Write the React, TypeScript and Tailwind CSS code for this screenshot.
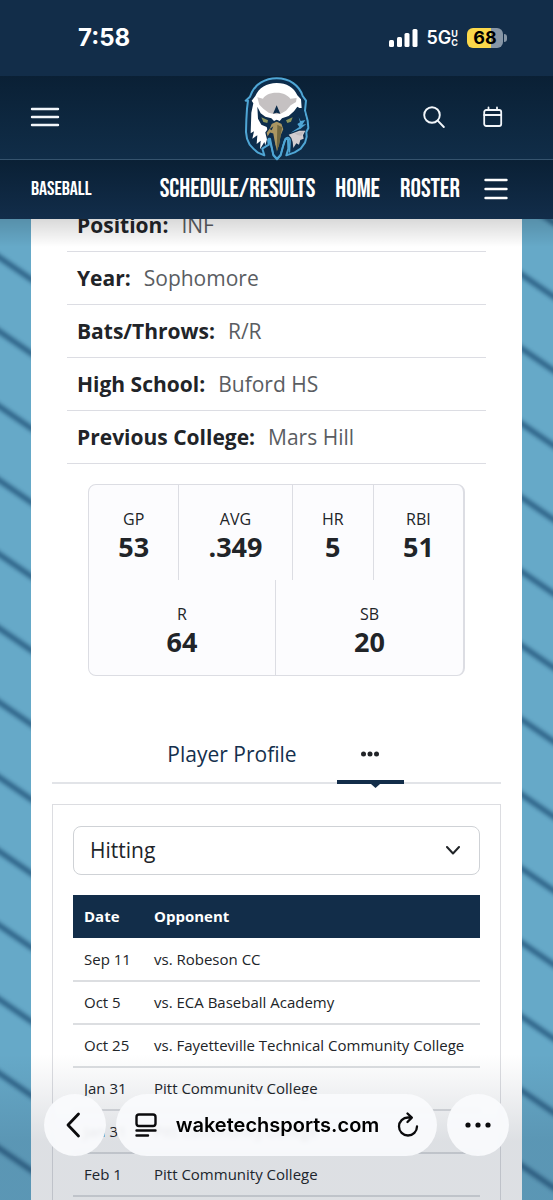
import React from "react";

type Stat = { label: string; value: string };
type Game = { date: string; opponent: string };

const BIO = [
  { label: "Position", value: "INF" },
  { label: "Year", value: "Sophomore" },
  { label: "Bats/Throws", value: "R/R" },
  { label: "High School", value: "Buford HS" },
  { label: "Previous College", value: "Mars Hill" },
];

const STATS_TOP: Stat[] = [
  { label: "GP", value: "53" },
  { label: "AVG", value: ".349" },
  { label: "HR", value: "5" },
  { label: "RBI", value: "51" },
];

const STATS_BOTTOM: Stat[] = [
  { label: "R", value: "64" },
  { label: "SB", value: "20" },
];

const GAMES: Game[] = [
  { date: "Sep 11", opponent: "vs. Robeson CC" },
  { date: "Oct 5", opponent: "vs. ECA Baseball Academy" },
  { date: "Oct 25", opponent: "vs. Fayetteville Technical Community College" },
  { date: "Jan 31", opponent: "Pitt Community College" },
  { date: "Jan 31", opponent: "Pitt Community College" },
  { date: "Feb 1", opponent: "Pitt Community College" },
];

const StatusBar: React.FC = () => (
  <div className="flex h-[76px] items-center justify-between bg-[#122d49] pr-[46px] pl-[78px] font-['Inter',sans-serif] text-white">
    <span className="text-2xl font-bold">7:58</span>
    <div className="flex items-center gap-[9px]">
      <svg width="29" height="18" viewBox="0 0 29 18" fill="#fff" aria-hidden="true">
        <rect x="0" y="11" width="5" height="7" rx="1.5" />
        <rect x="8" y="8" width="5" height="10" rx="1.5" />
        <rect x="15.500" y="4" width="5" height="14" rx="1.500" />
        <rect x="23.500" y="0" width="5" height="18" rx="1.500" />
      </svg>
      <div className="flex items-center text-lg font-semibold">
        <span>5G</span>
        <span className="flex flex-col text-[9px] leading-[9px] font-bold">
          <span>U</span>
          <span>C</span>
        </span>
      </div>
      <div className="flex items-center gap-px">
        <div className="flex h-5 w-9 items-center justify-center rounded-md bg-linear-to-r from-[#fbd84a] from-68% to-[#8796a6] to-68% text-lg font-bold text-black">
          68
        </div>
        <div className="h-2 w-[3px] rounded-r-full bg-[#8796a6]" />
      </div>
    </div>
  </div>
);

const EagleLogo: React.FC = () => (
  <svg className="h-[84px] w-[68px]" viewBox="35 21 204 252" role="img" aria-label="Wake Tech Eagles">
    <path
      d="M136 25 C100 25 72 44 62 66 L56 80 L43 92 L50 92 L47 116 L45 150 L44 186 L47 206 L55 224 L68 238 L80 248 L99 256 L93 236 L112 224 L110 206 L116 206 L126 256 L137 268 L148 256 L156 226 L163 206 L170 208 L171 236 L165 256 L190 247 L208 236 L221 218 L226 200 L225 186 L231 174 L229 152 L221 122 L224 92 L214 78 C204 46 174 25 136 25Z"
      fill="#0d2d4c"
      stroke="#4fa6d5"
      strokeWidth="6"
      strokeLinejoin="round"
    />
    {/* white crown and cheek */}
    <path
      d="M136 39 C106 39 82 54 72 78 L61 92 L66 100 L60 128 L58 190 L68 184 L63 206 L78 196 L76 222 L88 212 L86 238 L99 216 L102 226 L108 204 L110 186 L106 170 L110 158 L136 154 L156 156 L174 148 L190 132 L198 114 L211 114 L209 88 L198 76 C188 52 166 39 136 39Z"
      fill="#fff"
    />
    <path
      d="M136 68 C114 68 100 76 95 86 L78 82 L84 104 L96 116 L112 128 L124 131 L136 133 L148 131 L164 122 L178 106 L194 96 L196 84 L177 86 C170 76 156 68 136 68Z"
      fill="#c5c1c2"
    />
    <path d="M136 106 L125 131 L136 128 L147 131Z" fill="#0d2d4c" />
    {/* brow and eyes */}
    <path
      d="M78 110 L88 130 L102 140 L120 145 L128 153 L136 149 L145 153 L152 145 L172 138 L188 124 L198 110 L218 122 L224 152 L206 178 L180 190 L158 176 L148 164 L124 164 L108 172 L90 164 L80 146Z"
      fill="#0d2d4c"
    />
    <path d="M90 142 L110 151 L108 159 L96 156Z" fill="#8c955c" />
    <path d="M164 151 L184 142 L179 155 L168 159Z" fill="#8c955c" />
    {/* beak */}
    <path d="M136 153 L120 160 L114 174 L104 188 L108 204 L117 190 L124 192 L130 224 L137 250 L145 224 L150 196 L158 178 L152 160Z" fill="#aa9662" stroke="#0d2d4c" strokeWidth="4" />
    <path d="M138 164 L136 246 L144 222 L149 190 L153 172Z" fill="#72683f" />
    <path d="M115 177 L126 169 L121 181Z" fill="#0d2d4c" />
    {/* right side feathers */}
    <path d="M202 142 L208 153 L222 150 L213 164 L225 162 L208 176 L178 188 L204 171 L198 162 L206 157Z" fill="#4fa6d5" />
    <path d="M172 194 L204 182 L222 182 L215 196 L217 206 L207 210 L203 224 L195 220 L186 234 L184 216 L180 204Z" fill="#d2cdd0" />
    <path d="M190 190 L218 184 L210 198 L198 195Z" fill="#c0bbbf" />
    <path d="M137 266 L148 254 L157 222 C162 196 178 198 176 216 L174 248" fill="none" stroke="#4fa6d5" strokeWidth="5" />
    <path d="M137 266 L126 254 L114 206 L112 226" fill="none" stroke="#4fa6d5" strokeWidth="5" />
  </svg>
);

const SiteHeader: React.FC = () => (
  <div className="flex h-[84px] items-center border-b border-[#36546e] bg-linear-to-b from-[#0a2035] to-[#102d48] pr-[50px] pl-[30px]">
    <div className="flex flex-1 pb-0.5">
      <button type="button" aria-label="Open menu">
        <svg width="30" height="20" viewBox="0 0 30 20" stroke="#f2f6fa" strokeWidth="2.400" strokeLinecap="round">
          <path d="M2 2H28M2 10H28M2 18H28" />
        </svg>
      </button>
    </div>
    <a href="#home" className="-mr-5 pt-0.5">
      <EagleLogo />
    </a>
    <div className="flex flex-1 items-center justify-end gap-[38px] pb-0.5">
      <button type="button" aria-label="Search">
        <svg width="22" height="22" viewBox="0 0 22 22" fill="none" stroke="#f2f6fa" strokeWidth="1.900" strokeLinecap="round">
          <circle cx="9" cy="9" r="7.800" />
          <path d="M14.700 14.700L20.800 21" />
        </svg>
      </button>
      <button type="button" aria-label="Calendar">
        <svg width="20" height="22" viewBox="0 0 20 22" fill="none" stroke="#f2f6fa" strokeWidth="1.800" strokeLinecap="round">
          <rect x="1.200" y="4" width="17" height="16" rx="2" />
          <path d="M1.200 9H18.200M5.500 1.500V4M14 1.500V4" />
        </svg>
      </button>
    </div>
  </div>
);

const SportNav: React.FC = () => (
  <nav className="flex h-[59px] items-center justify-between bg-linear-to-b from-[#0a2035] to-[#122d4a] pr-[45px] pb-px pl-[31px] font-['Bebas_Neue','Oswald',sans-serif] text-[26px] text-white">
    <a href="#baseball" className="text-xl">BASEBALL</a>
    <div className="flex items-center gap-5">
      <a href="#schedule">SCHEDULE/RESULTS</a>
      <a href="#home">HOME</a>
      <a href="#roster">ROSTER</a>
      <button type="button" aria-label="More pages" className="ml-1">
        <svg width="24" height="22" viewBox="0 0 24 22" stroke="#fff" strokeWidth="2.400" strokeLinecap="round">
          <path d="M1.500 2H22.500M1.500 11H22.500M1.500 20H22.500" />
        </svg>
      </button>
    </div>
  </nav>
);

const STRIPES = Array.from({ length: 15 }, (_, i) => i);

/* Blue side wall with soft diagonal stripes */
const Gutter: React.FC<{ offset: number }> = ({ offset }) => (
  <svg className="h-full w-[31px] shrink-0 bg-[#66a9c8]" aria-hidden="true">
    <g stroke="#1f5076" strokeWidth="5" opacity="0.85" style={{ filter: "blur(2px)" }}>
      {STRIPES.map((i) => (
        <path key={i} d={`M-10 ${offset - 82 + Math.round(i * 74.2)}L41 ${offset - 47 + Math.round(i * 74.2)}`} />
      ))}
    </g>
  </svg>
);

const StatCell: React.FC<Stat> = ({ label, value }) => (
  <div className="flex flex-auto flex-col items-center border-[#dcdde3] px-7 pt-[22px] not-last:border-r">
    <span className="text-base leading-6">{label}</span>
    <span className="text-[27px] leading-8 font-bold">{value}</span>
  </div>
);

const App: React.FC = () => {
  return (
    <div className="relative flex h-screen flex-col overflow-hidden bg-[#66a9c8] font-['Open_Sans',sans-serif] text-[#212428]">
      <header className="relative z-10 shrink-0">
        <StatusBar />
        <SiteHeader />
        <SportNav />
        <div className="absolute inset-x-0 top-full h-7 bg-linear-to-b from-black/15 to-transparent" />
      </header>

      <div className="flex min-h-0 flex-1">
        <Gutter offset={40} />

        <main className="min-w-0 flex-1 overflow-hidden bg-white">
          <dl className="mx-9 -mt-5">
            {BIO.map((item) => (
              <div key={item.label} className="flex h-[53px] items-center gap-[13px] border-b border-[#dcdde3] px-[10px] pt-px text-[21px]">
                <dt className="font-bold">{item.label}:</dt>
                <dd className="text-[#5a5d62]">{item.value}</dd>
              </div>
            ))}
          </dl>

          <section className="mx-[57px] mt-5 overflow-hidden rounded-lg border border-r-2 border-[#dcdde3] bg-[#fcfcfe]">
            <div className="flex h-[95px]">
              {STATS_TOP.map((s) => (
                <StatCell key={s.label} {...s} />
              ))}
            </div>
            <div className="grid h-[95px] grid-cols-2">
              {STATS_BOTTOM.map((s) => (
                <StatCell key={s.label} {...s} />
              ))}
            </div>
          </section>

          <div role="tablist" className="mx-[21px] mt-[51px] flex h-[57px] justify-center border-b-2 border-[#e2e4e8] pr-[22px]">
            <button type="button" role="tab" aria-selected="false" className="px-10 text-[21px] text-[#14304d]">
              Player Profile
            </button>
            <button type="button" role="tab" aria-selected="true" aria-label="More tabs" className="relative -mb-0.5 flex w-[67px] items-center justify-center border-b-4 border-[#122d49]">
              <svg width="20" height="6" viewBox="0 0 20 6" fill="#212428">
                <circle cx="3.500" cy="3" r="2.500" />
                <circle cx="10" cy="3" r="2.500" />
                <circle cx="16.500" cy="3" r="2.500" />
              </svg>
              <svg className="absolute top-full right-6 mt-1" width="9" height="4" viewBox="0 0 9 4" fill="#122d49">
                <path d="M0 0H9L4.500 4Z" />
              </svg>
            </button>
          </div>

          <section className="mx-[21px] mt-5 h-[500px] border border-[#dcdde1] px-5 pt-[21px]">
            <div className="relative">
              <select aria-label="Category" className="h-[49px] w-full appearance-none rounded-lg border border-[#cfd2d6] bg-white px-4 text-[21px]">
                <option>Hitting</option>
              </select>
              <svg className="pointer-events-none absolute top-5 right-5" width="14" height="9" viewBox="0 0 14 9" fill="none" stroke="#212428" strokeWidth="2" strokeLinecap="round" strokeLinejoin="round">
                <path d="M1 1L7 7.500L13 1" />
              </svg>
            </div>
            <table className="mt-5 w-full text-left text-[15px]">
              <thead className="bg-[#122d49] text-white">
                <tr className="h-[43px]">
                  <th className="w-[81px] pl-[11px] font-bold">Date</th>
                  <th className="font-bold">Opponent</th>
                </tr>
              </thead>
              <tbody>
                {GAMES.map((game, i) => (
                  <tr key={i} className="h-[43px] border-b-2 border-[#dcdee1]">
                    <td className="pl-[11px]">{game.date}</td>
                    <td className="whitespace-nowrap">{game.opponent}</td>
                  </tr>
                ))}
              </tbody>
            </table>
          </section>
        </main>

        <Gutter offset={57} />
      </div>

      {/* Browser toolbar floating over the page */}
      <div className="absolute inset-x-0 bottom-0 z-20 bg-linear-to-b from-transparent to-[#1c2d46]/15 to-60% pt-10 pb-11">
        <div className="flex items-center gap-[10px] px-11">
          <button type="button" aria-label="Back" className="flex size-[62px] shrink-0 items-center justify-center rounded-full bg-[#fafbfd]/92 pr-1 backdrop-blur-[2px]">
            <svg width="15" height="26" viewBox="0 0 15 26" fill="none" stroke="#0b0b0d" strokeWidth="2.800" strokeLinecap="round" strokeLinejoin="round">
              <path d="M12.500 2L2 13L12.500 24" />
            </svg>
          </button>
          <div className="flex h-[62px] flex-1 items-center justify-between rounded-full bg-[#fafbfd]/92 px-[18px] backdrop-blur-[2px]">
            <button type="button" aria-label="Page options">
              <svg width="24" height="24" viewBox="0 0 24 24" fill="none" stroke="#0b0b0d" strokeWidth="2.400" strokeLinecap="round">
                <rect x="2.500" y="1.500" width="19" height="11.500" rx="2.500" />
                <path d="M2.500 17.500H21.500M2.500 22.500H14" />
              </svg>
            </button>
            <span className="font-['Inter',sans-serif] text-xl font-semibold text-black">waketechsports.com</span>
            <button type="button" aria-label="Reload">
              <svg width="22" height="26" viewBox="0 0 22 26" fill="none" stroke="#0b0b0d" strokeWidth="2.300" strokeLinecap="round" strokeLinejoin="round">
                <path d="M20 14.500A9 9 0 1 1 11 5.500H14" />
                <path d="M10.500 1.500L14.800 5.600L10.500 10" />
              </svg>
            </button>
          </div>
          <button type="button" aria-label="More" className="flex size-[62px] shrink-0 items-center justify-center rounded-full bg-[#fafbfd]/92 backdrop-blur-[2px]">
            <svg width="28" height="6" viewBox="0 0 28 6" fill="#0b0b0d">
              <circle cx="4" cy="3" r="2.600" />
              <circle cx="14" cy="3" r="2.600" />
              <circle cx="24" cy="3" r="2.600" />
            </svg>
          </button>
        </div>
      </div>
    </div>
  );
};

export default App;
